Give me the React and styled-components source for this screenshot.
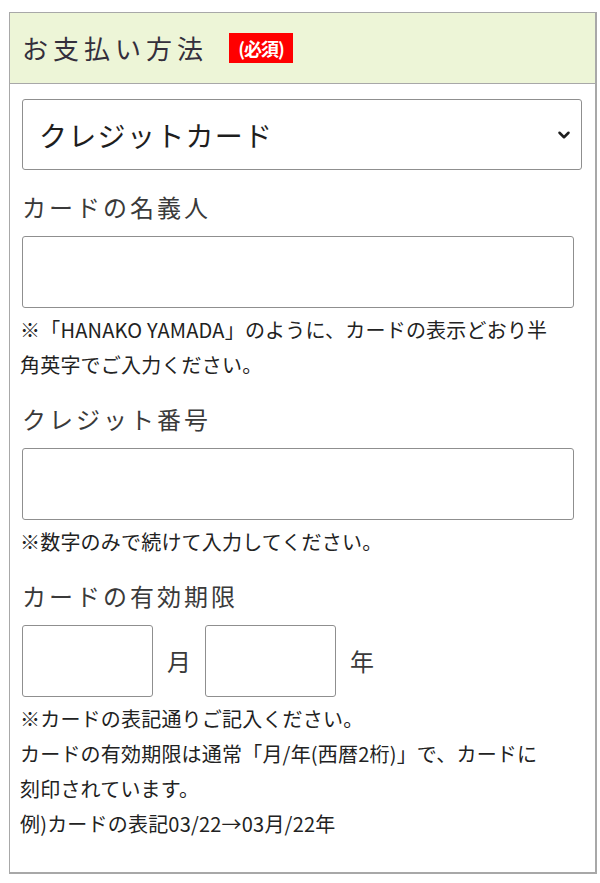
import styled, { createGlobalStyle } from "styled-components"
import { ChevronDown } from "lucide-react"

const GlobalStyle = createGlobalStyle`
  html, body {
    margin: 0;
    padding: 0;
    background: #ffffff;
  }
  body {
    font-family: "Noto Sans CJK JP", "Noto Sans", sans-serif;
    color: #333333;
  }
`

export default function App() {
  return (
    <>
      <GlobalStyle />
      <Page>
        <Panel>
          <Header>
            <HeaderTitle>お支払い方法</HeaderTitle>
            <RequiredBadge>(必須)</RequiredBadge>
          </Header>
          <Body>
            <SelectWrap>
              <Select defaultValue='credit'>
                <option value='credit'>クレジットカード</option>
              </Select>
              <SelectIcon>
                <ChevronDown size={18} strokeWidth={3.4} />
              </SelectIcon>
            </SelectWrap>

            <Label>カードの名義人</Label>
            <TextInput type='text' />
            <Note>
              ※「HANAKO YAMADA」のように、カードの表示どおり半
              <br />
              角英字でご入力ください。
            </Note>

            <Label>クレジット番号</Label>
            <TextInput type='text' />
            <Note>※数字のみで続けて入力してください。</Note>

            <Label>カードの有効期限</Label>
            <ExpiryRow>
              <ShortInput type='text' />
              <Unit>月</Unit>
              <ShortInput type='text' />
              <Unit>年</Unit>
            </ExpiryRow>
            <Note>
              ※カードの表記通りご記入ください。
              <br />
              カードの有効期限は通常「月/年(西暦2桁)」で、カードに
              <br />
              刻印されています。
              <br />
              例)カードの表記03/22→03月/22年
            </Note>
          </Body>
        </Panel>
      </Page>
    </>
  )
}

const Page = styled.div`
  padding: 12px 3px 10px 9px;
`

const Panel = styled.div`
  width: 588px;
  box-sizing: border-box;
  border: 1px solid #a8a8a8;
  border-right-width: 2px;
  border-bottom-width: 2px;
  background: #ffffff;
`

const Header = styled.div`
  height: 71px;
  box-sizing: border-box;
  display: flex;
  align-items: center;
  padding: 0 12px 0 12px;
  background: #edf5d7;
  border-bottom: 1px solid #a8a8a8;
`

const HeaderTitle = styled.h2`
  margin: 0;
  font-size: 26px;
  font-weight: 400;
  letter-spacing: 5px;
  color: #342f3c;
  line-height: 1;
`

const RequiredBadge = styled.span`
  margin-left: 21px;
  height: 30px;
  width: 64px;
  display: inline-flex;
  align-items: center;
  justify-content: center;
  background: #ff0000;
  color: #ffffff;
  font-size: 18px;
  font-weight: 700;
  letter-spacing: -1px;
`

const Body = styled.div`
  padding: 15px 13px 31px 12px;
`

const SelectWrap = styled.div`
  position: relative;
  width: 100%;
`

const Select = styled.select`
  display: block;
  width: 100%;
  height: 71px;
  box-sizing: border-box;
  appearance: none;
  -webkit-appearance: none;
  background: #ffffff;
  border: 1px solid #8f8f8f;
  border-radius: 3px;
  padding: 0 40px 0 16px;
  font-family: "Noto Sans CJK JP", "Noto Sans", sans-serif;
  font-size: 28px;
  letter-spacing: 1.3px;
  color: #1e1e1e;
  outline: none;
`

const SelectIcon = styled.span`
  position: absolute;
  right: 9px;
  top: 50%;
  transform: translateY(-50%);
  display: flex;
  color: #1e1e1e;
  pointer-events: none;
`

const Label = styled.div`
  padding-top: 20px;
  margin-bottom: 12px;
  line-height: 34px;
  font-size: 24px;
  letter-spacing: 3px;
  color: #3a3a3a;
`

const TextInput = styled.input`
  display: block;
  width: calc(100% - 8px);
  height: 72px;
  box-sizing: border-box;
  border: 1px solid #8f8f8f;
  border-radius: 3px;
  background: #ffffff;
  font-size: 24px;
  padding: 0 12px;
  outline: none;
`

const Note = styled.p`
  margin: 0 0 0 -2px;
  padding-top: 4px;
  line-height: 35px;
  font-size: 20px;
  color: #222222;
  letter-spacing: 0.2px;
  white-space: nowrap;
`

const ExpiryRow = styled.div`
  display: flex;
  align-items: center;
  gap: 14px;
`

const ShortInput = styled.input`
  width: 131px;
  height: 72px;
  box-sizing: border-box;
  border: 1px solid #8f8f8f;
  border-radius: 3px;
  background: #ffffff;
  font-size: 24px;
  padding: 0 10px;
  outline: none;
`

const Unit = styled.span`
  font-size: 24px;
  color: #3a3a3a;
  line-height: 1;
`
